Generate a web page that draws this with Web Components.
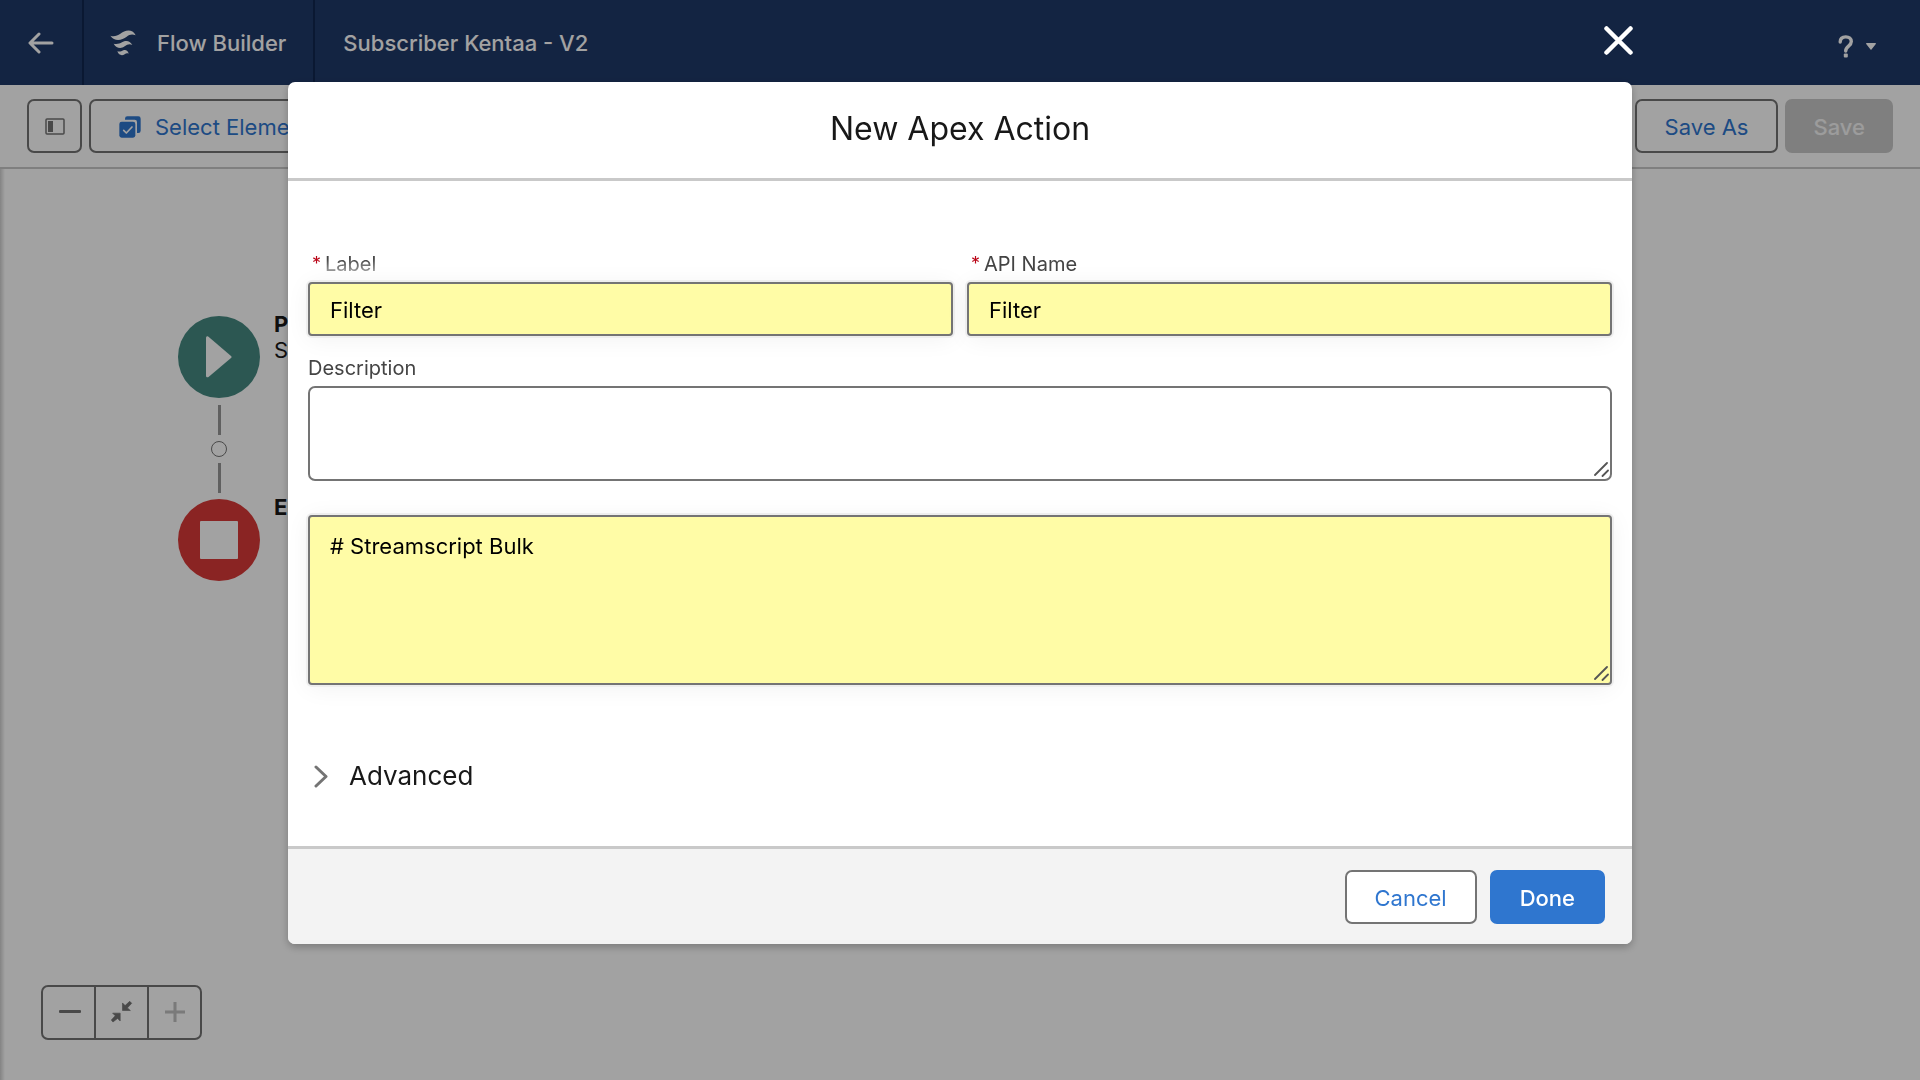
<!DOCTYPE html>
<html lang="en">
<head>
<meta charset="utf-8">
<title>Flow Builder</title>
<style>
  html, body { height: 100%; }
  body {
    margin: 0;
    font-family: Inter, "Liberation Sans", sans-serif;
    font-size: 22px;
    line-height: 26px;
    color: #181818;
    --navy: #1f3968;
    --navy-dark: #10264f;
    --border: #747474;
    --line: #c9c9c9;
    --blue: #2f76cf;
  }
</style>
</head>
<body>
<flow-app></flow-app>

<script>
class FlowButton extends HTMLElement {
  constructor() {
    super();
    this.attachShadow({ mode: 'open' });
    this.shadowRoot.innerHTML = `
      <style>
        :host { display: block; }
        button {
          display: flex;
          align-items: center;
          justify-content: center;
          gap: 14px;
          box-sizing: border-box;
          height: 54px;
          padding: 2px 28px 0;
          border: 2px solid var(--border);
          border-radius: 7px;
          background: #fff;
          color: var(--blue);
          font: inherit;
          white-space: nowrap;
        }
        :host([variant="brand"]) button {
          background: var(--blue);
          border-color: var(--blue);
          color: #fff;
          font-weight: 500;
        }
        :host([variant="disabled"]) button {
          padding: 2px 26px 0;
          background: var(--line);
          border-color: var(--line);
          color: #f6f6f6;
          font-weight: 500;
        }
        :host([variant="icon"]) button {
          width: 55px;
          padding: 0;
          color: var(--border);
        }
      </style>
      <button type="button"><slot></slot></button>
    `;
    const button = this.shadowRoot.querySelector('button');
    button.disabled = this.getAttribute('variant') === 'disabled';
    if (this.hasAttribute('label')) {
      button.setAttribute('aria-label', this.getAttribute('label'));
    }
  }
}
customElements.define('flow-button', FlowButton);

class FlowHeader extends HTMLElement {
  constructor() {
    super();
    this.attachShadow({ mode: 'open' });
    this.shadowRoot.innerHTML = `
      <style>
        :host {
          display: flex;
          height: 85px;
          background: var(--navy);
          color: #fff;
          font-weight: 500;
        }
        .back, .brand, .name, .help {
          display: flex;
          align-items: center;
        }
        .back {
          width: 82px;
          justify-content: center;
          border-right: 2px solid var(--navy-dark);
          color: inherit;
        }
        .brand {
          gap: 21px;
          padding: 0 27px 0 26px;
          border-right: 2px solid var(--navy-dark);
        }
        .name { padding-left: 28px; }
        h1 { margin: 0; font: inherit; }
        .help {
          margin-left: auto;
          padding: 8px 44px 0 0;
          gap: 12px;
          border: 0;
          background: none;
          color: inherit;
        }
      </style>
      <a class="back" href="#" aria-label="Back">
        <svg width="26" height="22" viewBox="0 0 26 22" fill="none" stroke="currentColor" stroke-width="3" stroke-linecap="round" stroke-linejoin="round"><path d="M24 11H3M11 2L2 11l9 9"/></svg>
      </a>
      <div class="brand">
        <svg width="26" height="26" viewBox="20 20 78 78" fill="currentColor">
          <path d="M21 37C32 41 42 37 51 31C63 22 86 14 97 36C86 31 78 34 70 40C56 51 34 56 21 37Z"/>
          <path d="M31 61C40 64 49 61 56 57C66 51 79 50 87 65C79 61 72 63 64 69C54 77 39 76 31 61Z"/>
          <path d="M42 84C49 86 54 84 60 81C67 78 74 82 76 91C71 88 68 90 64 93C56 98 46 96 42 84Z"/>
        </svg>
        <span>Flow Builder</span>
      </div>
      <div class="name"><h1>Subscriber Kentaa - V2</h1></div>
      <button class="help" type="button" aria-label="Help">
        <svg width="16" height="23" viewBox="0 0 16 23"><path d="M2.2 7C2.2 3.600 4.600 1.900 7.800 1.900c3.200 0 5.500 1.800 5.500 4.700 0 4.700-5.600 4.400-5.600 9.400" fill="none" stroke="currentColor" stroke-width="3.400" stroke-linecap="round"/><rect x="5.800" y="18.600" width="4" height="4" rx="1" fill="currentColor"/></svg>
        <svg width="10" height="7" viewBox="0 0 10 7" fill="currentColor"><path d="M.6 0h8.800c.5 0 .7.500.4.900L5.500 6.500c-.3.400-.7.400-1 0L.2.900C-.1.500.1 0 .6 0z"/></svg>
      </button>
    `;
  }
}
customElements.define('flow-header', FlowHeader);

class FlowToolbar extends HTMLElement {
  constructor() {
    super();
    this.attachShadow({ mode: 'open' });
    this.shadowRoot.innerHTML = `
      <style>
        :host {
          display: flex;
          align-items: center;
          gap: 7px;
          height: 82px;
          padding: 0 27px;
          border-bottom: 2px solid var(--line);
          background: #fff;
        }
        .spacer { flex: 1; }
      </style>
      <flow-button variant="icon" label="Toggle Toolbox">
        <svg width="20" height="17" viewBox="0 0 20 17"><rect x="1" y="1" width="18" height="15" rx="1" fill="none" stroke="currentColor" stroke-width="1.500"/><rect x="3" y="3" width="5" height="11" fill="currentColor"/></svg>
      </flow-button>
      <flow-button>
        <svg width="22" height="22" viewBox="26 26 66 66">
          <path fill="currentColor" d="M44 37v-3a7 7 0 0 1 7-7h33a7 7 0 0 1 7 7v36a7 7 0 0 1-7 7h-4V44a7 7 0 0 0-7-7z"/>
          <rect fill="currentColor" x="27" y="43" width="48" height="48" rx="7"/>
          <path fill="none" stroke="#fff" stroke-width="5" stroke-linecap="round" stroke-linejoin="round" d="M40 69l8 8 17-18"/>
        </svg>
        <span>Select Elements</span>
      </flow-button>
      <div class="spacer"></div>
      <flow-button>Save As</flow-button>
      <flow-button variant="disabled">Save</flow-button>
    `;
  }
}
customElements.define('flow-toolbar', FlowToolbar);

class FlowNode extends HTMLElement {
  constructor() {
    super();
    this.attachShadow({ mode: 'open' });
    const isStart = this.getAttribute('type') === 'start';
    this.shadowRoot.innerHTML = `
      <style>
        :host { display: flex; gap: 14px; height: 82px; white-space: nowrap; }
        .shape {
          display: flex;
          align-items: center;
          justify-content: center;
          flex: none;
          width: 82px;
          height: 82px;
          border-radius: 50%;
          background: ${isStart ? '#468a82' : '#d93a38'};
        }
        .text { margin-top: -5px; }
      </style>
      <div class="shape">
        ${isStart
          ? '<svg width="26" height="42" viewBox="0 0 26 42" fill="#fff"><path d="M0 2C0 .5 1.500-.2 2.800.9L25 20c.8.700.8 1.300 0 2L2.800 40.800C1.500 41.900 0 41.300 0 39.800z"/></svg>'
          : '<svg width="38" height="38" viewBox="0 0 38 38" fill="#fff"><rect width="38" height="38" rx="1"/></svg>'}
      </div>
      <div class="text"><slot></slot></div>
    `;
  }
}
customElements.define('flow-node', FlowNode);

class FlowZoom extends HTMLElement {
  constructor() {
    super();
    this.attachShadow({ mode: 'open' });
    this.shadowRoot.innerHTML = `
      <style>
        :host {
          display: inline-flex;
          border: 2px solid var(--border);
          border-radius: 7px;
          color: var(--border);
        }
        button {
          display: flex;
          align-items: center;
          justify-content: center;
          box-sizing: border-box;
          width: 51px;
          height: 51px;
          padding: 0 0 2px 2px;
          border: 0;
          background: none;
          color: inherit;
        }
        button + button { width: 53px; padding-left: 0; border-left: 2px solid var(--border); }
        button:disabled { color: #c0c0c0; }
      </style>
      <button type="button" aria-label="Zoom out">
        <svg width="22" height="22" viewBox="0 0 22 22" fill="currentColor"><rect x="0" y="9" width="22" height="3" rx="1"/></svg>
      </button>
      <button type="button" aria-label="Zoom to fit">
        <svg width="23" height="23" viewBox="325 150 70 70" fill="currentColor" stroke="currentColor" stroke-width="2" stroke-linejoin="round">
          <path d="M363 159l8 8 14-13 6 6-13 14 9 8h-24z"/>
          <path d="M356 190v24l-8-8-14 11-5-6 12-13-8-8z"/>
        </svg>
      </button>
      <button type="button" aria-label="Zoom in" disabled>
        <svg width="22" height="22" viewBox="0 0 22 22" fill="currentColor"><path d="M9.500 1h3v8.500H21v3h-8.500V21h-3v-8.500H1v-3h8.500z"/></svg>
      </button>
    `;
  }
}
customElements.define('flow-zoom', FlowZoom);

class FlowCanvas extends HTMLElement {
  constructor() {
    super();
    this.attachShadow({ mode: 'open' });
    this.shadowRoot.innerHTML = `
      <style>
        :host {
          display: flex;
          flex-direction: column;
          justify-content: space-between;
          box-sizing: border-box;
          flex: 1;
          padding: 147px 41px 40px;
          background: linear-gradient(90deg, #d0d0d0, #fff 5px);
        }
        .flow { margin-left: 137px; }
        .link {
          display: flex;
          flex-direction: column;
          align-items: center;
          gap: 6px;
          width: 82px;
          padding: 7px 0 6px;
        }
        .line { width: 3px; height: 30px; background: #979797; }
        .dot {
          box-sizing: border-box;
          width: 16px;
          height: 16px;
          border: 1px solid var(--border);
          border-radius: 50%;
        }
      </style>
      <div class="flow">
        <flow-node type="start"><b>Platform Event</b><br>Start</flow-node>
        <div class="link">
          <div class="line"></div>
          <div class="dot"></div>
          <div class="line"></div>
        </div>
        <flow-node type="end"><b>End</b></flow-node>
      </div>
      <div><flow-zoom></flow-zoom></div>
    `;
  }
}
customElements.define('flow-canvas', FlowCanvas);

// text input or textarea together with its label
class FlowField extends HTMLElement {
  constructor() {
    super();
    this.attachShadow({ mode: 'open' });
    const label = this.getAttribute('label') || '';
    const value = this.getAttribute('value') || '';
    const required = this.hasAttribute('required');
    const multiline = this.hasAttribute('multiline');
    const hideLabel = this.hasAttribute('hide-label');
    this.shadowRoot.innerHTML = `
      <style>
        :host { display: block; min-width: 0; --height: 54px; }
        label {
          display: flex;
          gap: 4px;
          margin-bottom: 6px;
          font-size: 20px;
          line-height: 24px;
          color: #444;
        }
        .required { padding-left: 4px; color: #ba0517; font-size: 18px; }
        :host([faded]) .text {
          -webkit-mask-image: linear-gradient(#000 30%, rgba(0, 0, 0, .5) 85%);
          mask-image: linear-gradient(#000 30%, rgba(0, 0, 0, .5) 85%);
        }
        .box { position: relative; display: flex; }
        input, textarea {
          box-sizing: border-box;
          width: 100%;
          height: var(--height);
          margin: 0;
          padding: 2px 20px 0;
          border: 2px solid var(--border);
          border-radius: 7px;
          background: #fff;
          color: #000;
          font: inherit;
          outline: none;
        }
        textarea { padding: 16px 20px; resize: none; }
        :host([highlight]) input, :host([highlight]) textarea {
          border-radius: 4px;
          background: #fffca6;
          box-shadow: 0 0 0 2px #eeeeee, 0 3px 24px rgba(0, 0, 0, .06);
        }
        .grip {
          position: absolute;
          right: 3px;
          bottom: 4px;
          pointer-events: none;
        }
      </style>
      ${hideLabel ? '' : `<label for="control">${required ? '<span class="required">*</span>' : ''}<span class="text">${label}</span></label>`}
      <div class="box">
        ${multiline
          ? `<textarea id="control"${hideLabel ? ` aria-label="${label}"` : ''}>${value}</textarea>
             <svg class="grip" width="15" height="15" viewBox="0 0 15 15" fill="none" stroke="#555" stroke-width="1.800" stroke-linecap="round"><path d="M1 13L13 1M8.500 14l5.500-5.500"/></svg>`
          : `<input id="control" type="text" value="${value}">`}
      </div>
    `;
    if (this.hasAttribute('height')) {
      this.shadowRoot.querySelector('.box').style.setProperty('--height', this.getAttribute('height'));
    }
  }
}
customElements.define('flow-field', FlowField);

class FlowModal extends HTMLElement {
  constructor() {
    super();
    this.attachShadow({ mode: 'open' });
    this.shadowRoot.innerHTML = `
      <style>
        :host {
          position: fixed;
          inset: 0;
          display: block;
          padding-top: 82px;
          background: rgba(0, 0, 0, .365);
        }
        section {
          position: relative;
          width: 70%;
          margin: 0 auto;
          border-radius: 7px;
          background: #fff;
          box-shadow: 0 3px 8px rgba(0, 0, 0, .25);
        }
        header {
          padding: 27px 20px 29px;
          border-bottom: 3px solid var(--line);
          text-align: center;
        }
        h2 { margin: 0; font-size: 32px; line-height: 40px; font-weight: 400; }
        .body { padding: 71px 20px 54px; }
        footer {
          display: flex;
          justify-content: flex-end;
          gap: 13px;
          padding: 21px 27px 20px;
          border-top: 3px solid var(--line);
          border-radius: 0 0 7px 7px;
          background: #f3f3f3;
        }
        .close {
          position: absolute;
          right: -1px;
          top: -56px;
          display: flex;
          padding: 0;
          border: 0;
          background: none;
          color: #fff;
        }
      </style>
      <section role="dialog" aria-labelledby="title">
        <button class="close" type="button" aria-label="Close">
          <svg width="29" height="29" viewBox="0 0 29 29" stroke="currentColor" stroke-width="4.500" stroke-linecap="round"><path d="M2.500 2.500l24 24M26.500 2.500l-24 24"/></svg>
        </button>
        <header><h2 id="title"><slot name="title"></slot></h2></header>
        <div class="body"><slot></slot></div>
        <footer><slot name="footer"></slot></footer>
      </section>
    `;
  }
}
customElements.define('flow-modal', FlowModal);

class ApexActionForm extends HTMLElement {
  constructor() {
    super();
    this.attachShadow({ mode: 'open' });
    this.shadowRoot.innerHTML = `
      <style>
        :host { display: block; }
        .row {
          display: grid;
          grid-template-columns: 1fr 1fr;
          gap: 14px;
          margin-bottom: 20px;
        }
        .script { margin-top: 34px; }
        .advanced {
          display: flex;
          align-items: center;
          gap: 21px;
          margin-top: 75px;
          padding: 0 0 0 6px;
          border: 0;
          background: none;
          font: inherit;
          font-size: 26px;
          line-height: 32px;
          color: inherit;
        }
      </style>
      <div class="row">
        <flow-field label="Label" value="Filter" required highlight faded></flow-field>
        <flow-field label="API Name" value="Filter" required highlight></flow-field>
      </div>
      <flow-field label="Description" multiline height="95px"></flow-field>
      <flow-field class="script" label="Script" value="# Streamscript Bulk" multiline highlight hide-label height="170px"></flow-field>
      <button class="advanced" type="button" aria-expanded="false">
        <svg width="14" height="23" viewBox="0 0 14 23" fill="none" stroke="#747474" stroke-width="3" stroke-linecap="round" stroke-linejoin="round"><path d="M2 2l10 9.500L2 21"/></svg>
        <span>Advanced</span>
      </button>
    `;
  }
}
customElements.define('apex-action-form', ApexActionForm);

class FlowApp extends HTMLElement {
  constructor() {
    super();
    this.attachShadow({ mode: 'open' });
    this.shadowRoot.innerHTML = `
      <style>
        :host { display: flex; flex-direction: column; min-height: 100vh; }
      </style>
      <flow-header></flow-header>
      <flow-toolbar></flow-toolbar>
      <flow-canvas></flow-canvas>
      <flow-modal>
        <span slot="title">New Apex Action</span>
        <apex-action-form></apex-action-form>
        <flow-button slot="footer">Cancel</flow-button>
        <flow-button slot="footer" variant="brand">Done</flow-button>
      </flow-modal>
    `;
  }
}
customElements.define('flow-app', FlowApp);
</script>
</body>
</html>
